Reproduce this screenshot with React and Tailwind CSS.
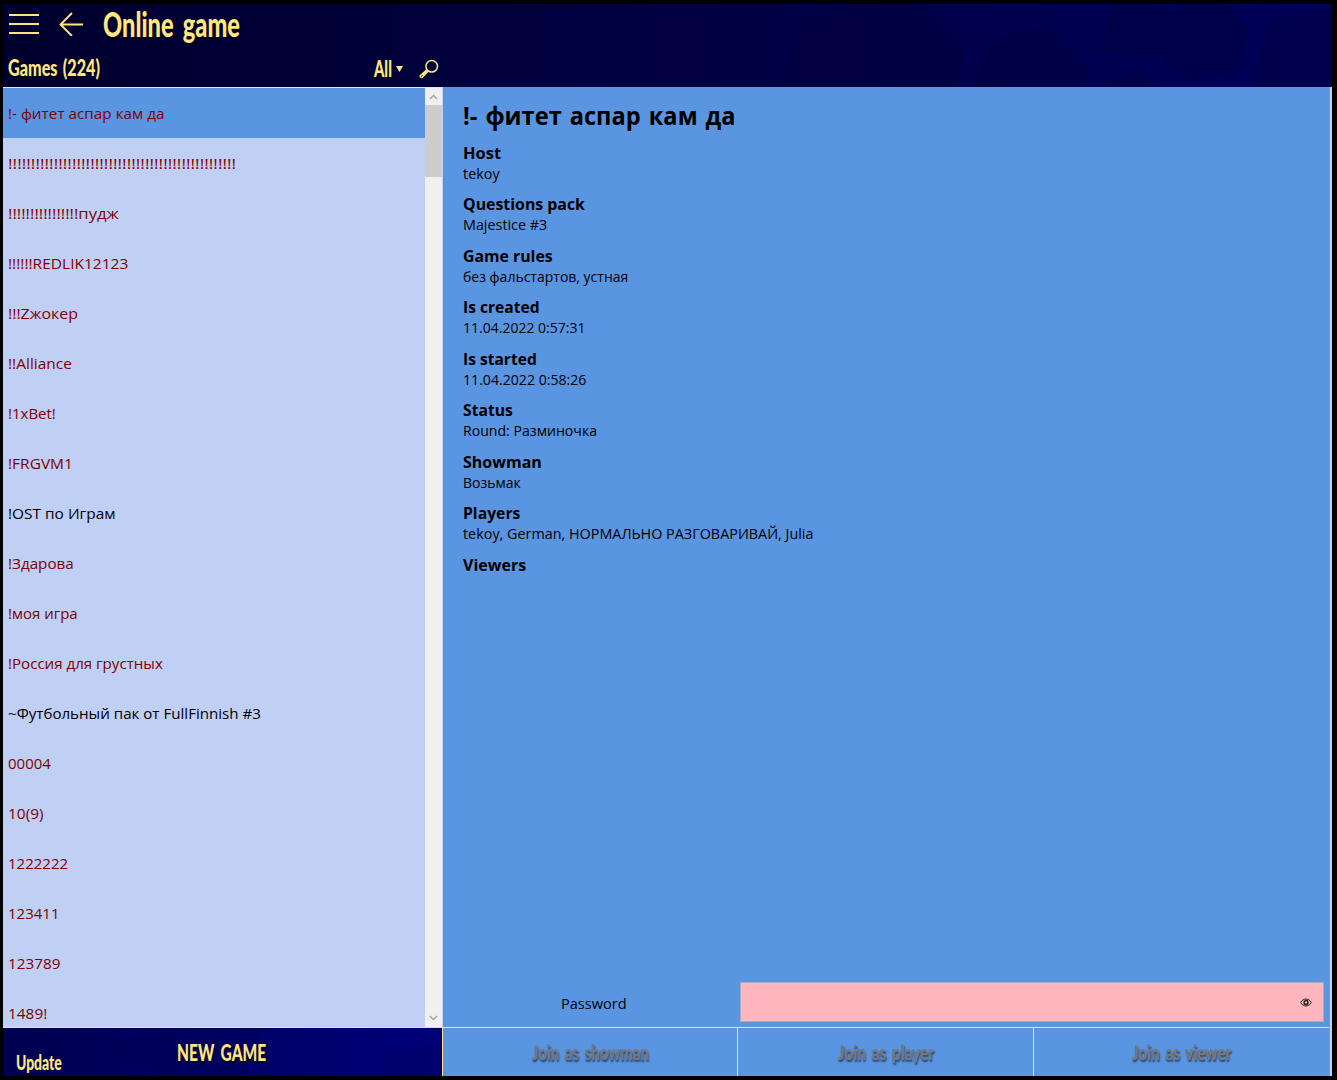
import { useLayoutEffect, useRef, useState } from "react";

function Fit({ w, className = "", children }) {
  const ref = useRef(null);
  const [s, setS] = useState(1);
  useLayoutEffect(() => {
    const measure = () => ref.current && setS(w / ref.current.offsetWidth);
    measure();
    document.fonts?.ready.then(measure);
  }, [w]);
  return (
    <span className="block overflow-visible" style={{ width: w }}>
      <span
        ref={ref}
        className={`inline-block origin-left align-top whitespace-nowrap ${className}`}
        style={{ transform: `scaleX(${s})` }}
      >
        {children}
      </span>
    </span>
  );
}

const games = [
  ["!- фитет аспар кам да", 157],
  ["!".repeat(50), 228],
  ["!!!!!!!!!!!!!!!!пудж", 111],
  ["!!!!!!REDLIK12123", 120],
  ["!!!Zжокер", 70],
  ["!!Alliance", 64],
  ["!1xBet!", 48],
  ["!FRGVM1", 65],
  ["!OST по Играм", 108, true],
  ["!Здарова", 66],
  ["!моя игра", 70],
  ["!Россия для грустных", 155],
  ["~Футбольный пак от FullFinnish #3", 253, true],
  ["00004", 43],
  ["10(9)", 36],
  ["1222222", 60],
  ["123411", 51],
  ["123789", 52],
  ["1489!", 39],
];

const details = [
  ["Host", 38, "tekoy", 37],
  ["Questions pack", 122, "Majestice #3", 84],
  ["Game rules", 90, "без фальстартов, устная", 165],
  ["Is created", 77, "11.04.2022 0:57:31", 122],
  ["Is started", 74, "11.04.2022 0:58:26", 123],
  ["Status", 50, "Round: Разминочка", 134],
  ["Showman", 79, "Возьмак", 58],
  ["Players", 57, "tekoy, German, НОРМАЛЬНО РАЗГОВАРИВАЙ, Julia", 350],
  ["Viewers", 63, "", 0],
];

const title = "font-['Lato'] font-black text-[#ffe682] [text-shadow:1px_2px_2px_rgba(0,0,0,0.8)]";

function HeaderTexture() {
  return (
    <svg className="absolute inset-0 h-full w-full" viewBox="0 0 1329 83" preserveAspectRatio="none">
      <g fill="#00003d" opacity="0.45">
        <path d="M934 14 962 42 955 83H780L800 20 850 0H920Z" />
        <path d="M982 38 1042 22 1085 66 1082 83H972Z" />
        <path d="M1110 0H1140L1175 8 1162 52 1095 48Z" />
        <path d="M1175 0H1225L1246 24 1234 66 1190 76 1160 58Z" />
        <path d="M1265 18 1329 2V83H1251Z" />
        <path d="M1102 78 1138 68 1152 83H1102Z" />
      </g>
    </svg>
  );
}

function FooterTexture() {
  return (
    <svg className="absolute inset-0 h-full w-full" viewBox="0 0 439 48" preserveAspectRatio="none">
      <g fill="#000050" opacity="0.25">
        <path d="M10 20 50 8 77 30 70 48H0Z" />
        <path d="M102 20 150 0H260L240 48H160Z" />
        <path d="M385 25 439 15V48H378Z" />
      </g>
    </svg>
  );
}

function ScrollBar() {
  return (
    <div className="flex w-[17px] shrink-0 flex-col bg-[#f0f0f0]">
      <div className="flex h-[17px] items-center justify-center">
        <svg width="9" height="6" viewBox="0 0 9 6" fill="none" stroke="#a0a0a0" strokeWidth="1.4"><path d="M1 5 4.5 1.5 8 5" /></svg>
      </div>
      <div className="h-[72px] bg-[#cdcdcd]" />
      <div className="flex-1" />
      <div className="flex h-[17px] items-center justify-center pb-[2px]">
        <svg width="9" height="6" viewBox="0 0 9 6" fill="none" stroke="#a0a0a0" strokeWidth="1.4"><path d="M1 1 4.5 4.5 8 1" /></svg>
      </div>
    </div>
  );
}

function JoinButton({ w, children, className }) {
  return (
    <button className={`flex h-12 items-center justify-center pb-px ${className}`}>
      <Fit w={w} className="font-['Lato'] text-[21px] leading-[28px] font-black [word-spacing:3px] text-[#76797e] [text-shadow:1px_2px_2px_rgba(20,40,80,0.75)]">{children}</Fit>
    </button>
  );
}

export default function App() {
  return (
    <div className="h-[1080px] w-[1337px] overflow-hidden bg-black pt-1 pr-[5px] pb-1 pl-[3px] font-['Open_Sans','Noto_Sans',sans-serif]">
      <div className="flex h-[1072px] w-[1329px] flex-col">
        <header className="relative h-[83px] shrink-0 bg-linear-to-r from-[#00002e] via-[#000042] to-[#00005a]">
          <HeaderTexture />
          <div className="relative flex h-11 items-center pb-[4px] pl-[6px]">
            <svg width="30" height="20" viewBox="0 0 30 20" stroke="#ffe682" strokeWidth="2"><path d="M0 1H30M0 10H30M0 19H30" /></svg>
            <svg className="ml-[20px]" width="24" height="24" viewBox="0 0 24 24" fill="none" stroke="#ffe682" strokeWidth="1.9"><path d="M13 1 1.5 12.5 13 24M1.5 12.5H24" /></svg>
            <div className="ml-5"><Fit w={137} className={`${title} text-[34px] leading-[44px] [word-spacing:5px]`}>Online game</Fit></div>
          </div>
          <div className="relative flex h-[39px] items-center pt-[3px] pb-[2px] pl-[5px]">
            <Fit w={92} className={`${title} text-[22px] leading-[32px] [word-spacing:2px]`}>Games (224)</Fit>
            <div className="ml-[274px]"><Fit w={18} className={`${title} text-[23px] leading-[32px]`}>All</Fit></div>
            <svg className="ml-[4px]" width="7" height="7" viewBox="0 0 8 8" fill="#ffe682"><path d="M0 1H8L4 8Z" /></svg>
            <svg className="mt-px ml-[16px]" width="20" height="20" viewBox="0 0 20 20" fill="none" stroke="#ffe682" strokeWidth="1.5"><circle cx="12.7" cy="7.3" r="5.8" /><path d="M8 10.5 1.3 16.6Q.6 18.2 2.8 18.6L9.3 12M7.7 12 3.5 16" /></svg>
          </div>
        </header>
        <div className="flex h-[989px]">
          <aside className="flex w-[440px] shrink-0 flex-col bg-[#c1d0f5]">
            <div className="flex h-[940px] border-t border-[#dce5fb] pr-px">
              <div className="h-[939px] flex-1 overflow-hidden bg-[#c0cff4]">
                {games.map(([name, w, open], i) => (
                  <div key={i} className={`flex h-[50px] items-center pl-[5px] text-[15px] leading-[20px] ${i === 0 ? "bg-[#5a95e2]" : ""} ${open ? "text-black" : "text-[#800000]"}`}>
                    <Fit w={w}>{name}</Fit>
                  </div>
                ))}
              </div>
              <ScrollBar />
            </div>
            <div className="relative flex h-[49px] border-t border-r border-[#ffe682] bg-linear-to-r from-[#000052] to-[#00007a]">
              <FooterTexture />
              <button className="relative mt-[20px] ml-[13px] h-7"><Fit w={46} className="font-['Lato'] text-[20px] leading-[28px] font-black text-[#ffe682]">Update</Fit></button>
              <button className="relative mt-[10px] ml-[115px] h-7"><Fit w={89} className={`${title} text-[23px] leading-[28px] [word-spacing:4px]`}>NEW GAME</Fit></button>
            </div>
          </aside>
          <main className="flex w-[886px] shrink-0 flex-col bg-[#5a95e2]">
            <div className="h-[895px] pl-5">
              <div className="pt-[11px]"><Fit w={273} className="text-[25px] leading-[34px] font-bold [word-spacing:2px]">!- фитет аспар кам да</Fit></div>
              <dl className="pt-[9.6px]">
                {details.map(([k, kw, v, vw]) => (
                  <div key={k} className="h-[51.5px]">
                    <dt className="h-[22px]"><Fit w={kw} className="text-[16px] leading-[22px] font-bold">{k}</Fit></dt>
                    {v && <dd className="h-5"><Fit w={vw} className="text-[14px] leading-[20px]">{v}</Fit></dd>}
                  </div>
                ))}
              </dl>
            </div>
            <div className="flex h-[45px] pr-[5px]">
              <div className="flex w-[297px] items-center pt-px pl-[118px]"><Fit w={66} className="text-[15px] leading-[20px]">Password</Fit></div>
              <div className="flex h-10 flex-1 items-center justify-end border border-[#a9adb8] bg-[#ffb6be] pr-[11px]">
                <svg width="12" height="9" viewBox="0 0 12 9" fill="none" stroke="#222" strokeWidth="1"><path d="M.7 4.5C3-.1 9-.1 11.3 4.5 9 9.1 3 9.1.7 4.5Z" /><circle cx="6" cy="4.5" r="1.9" strokeWidth="1.5" /></svg>
              </div>
            </div>
            <div className="flex h-[49px] border-t border-[#f6e49a]">
              <JoinButton w={117} className="w-[295px] border-r border-[#f6e49a]">Join as showman</JoinButton>
              <JoinButton w={96} className="w-[296px] border-r border-[#f6e49a]">Join as player</JoinButton>
              <JoinButton w={99} className="w-[295px]">Join as viewer</JoinButton>
            </div>
          </main>
          <div className="-mt-px h-[990px] w-[3px] shrink-0 border-l border-[#8c98bb] bg-[#c1d0f5]" />
        </div>
      </div>
    </div>
  );
}
